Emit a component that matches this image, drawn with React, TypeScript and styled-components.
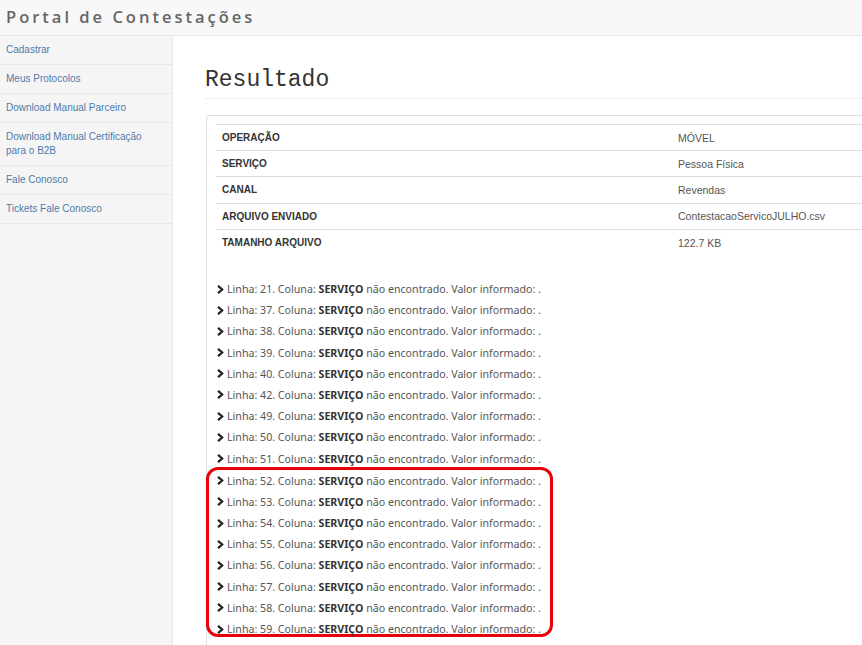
import React from "react";
import styled, { createGlobalStyle } from "styled-components";

const Global = createGlobalStyle`
  html, body { margin: 0; padding: 0; background: #fff; }
  body { font-family: "Liberation Sans", Arial, sans-serif; overflow: hidden; }
  * { box-sizing: border-box; }
`;

const Page = styled.div`
  width: 862px;
  height: 645px;
  display: flex;
  flex-direction: column;
  overflow: hidden;
`;

const Header = styled.header`
  height: 36px;
  flex: none;
  background: #f8f8f8;
  border-bottom: 1px solid #e7e7e7;
  display: flex;
  align-items: center;
  padding-left: 6px;
`;

const Brand = styled.div`
  font-family: "Open Sans", "Liberation Sans", sans-serif;
  font-size: 16.5px;
  letter-spacing: 3px;
  color: #666;
  font-weight: 600;
  margin-top: -3px;
  white-space: nowrap;
`;

const Body = styled.div`
  flex: 1;
  display: flex;
  min-height: 0;
`;

const Sidebar = styled.nav`
  width: 173px;
  flex: none;
  background: #f5f5f5;
  border-right: 1px solid #e7e7e7;
`;

const NavItem = styled.a`
  display: block;
  padding: 7px 22px 7px 6px;
  font-size: 10px;
  line-height: 14px;
  color: #4e7bab;
  text-decoration: none;
  border-bottom: 1px solid #e7e7e7;
`;

const Main = styled.main`
  flex: 1;
  padding: 31px 0 0 32px;
  min-width: 0;
`;

const Title = styled.h1`
  margin: 0;
  font-family: "Liberation Mono", "DejaVu Sans Mono", monospace;
  font-weight: 400;
  font-size: 23px;
  line-height: 26px;
  color: #333;
  padding-bottom: 5px;
  border-bottom: 1px solid #eee;
`;

const Panel = styled.section`
  margin-top: 16px;
  margin-left: 1px;
  border: 1px solid #ddd;
  border-right: none;
  border-radius: 4px 0 0 4px;
  padding: 8px 0 0 9px;
  height: 600px;
`;

const Table = styled.table`
  width: 100%;
  border-collapse: collapse;
  font-size: 10px;
  color: #333;
`;

const Cell = styled.td<{ $label?: boolean }>`
  border-top: 1px solid #ddd;
  height: 26.2px;
  padding: 0 0 0 6px;
  vertical-align: middle;
  font-weight: ${(p) => (p.$label ? 700 : 400)};
  color: ${(p) => (p.$label ? "#333" : "#555")};
  width: ${(p) => (p.$label ? "456px" : "auto")};
  font-size: ${(p) => (p.$label ? "10px" : "10.5px")};
`;

const ErrorList = styled.ul`
  list-style: none;
  margin: 23px 0 0 0;
  padding: 0;
`;

const Highlight = styled.div`
  border: 3px solid #e8000b;
  border-radius: 12px;
  width: 347px;
  margin: -2px 0 0 -10px;
  padding: 0 0 0 7px;
  height: 170px;
`;

const ErrorItem = styled.li`
  display: flex;
  align-items: center;
  height: 21.2px;
  font-family: "Noto Sans", "Open Sans", sans-serif;
  font-size: 10.65px;
  color: #555;
  white-space: nowrap;
  b { color: #333; font-weight: 700; }
`;

const Chevron = styled.svg`
  width: 8px;
  height: 9px;
  margin-right: 3px;
  flex: none;
`;

const nav = [
  "Cadastrar",
  "Meus Protocolos",
  "Download Manual Parceiro",
  "Download Manual Certificação para o B2B",
  "Fale Conosco",
  "Tickets Fale Conosco",
];

const rows: [string, string][] = [
  ["OPERAÇÃO", "MÓVEL"],
  ["SERVIÇO", "Pessoa Física"],
  ["CANAL", "Revendas"],
  ["ARQUIVO ENVIADO", "ContestacaoServicoJULHO.csv"],
  ["TAMANHO ARQUIVO", "122.7 KB"],
];

const before = [21, 37, 38, 39, 40, 42, 49, 50, 51];
const highlighted = [52, 53, 54, 55, 56, 57, 58, 59];

function Err({ n }: { n: number }) {
  return (
    <ErrorItem>
      <Chevron viewBox="0 0 8 9">
        <path d="M2 0.8 L6.2 4.5 L2 8.2" fill="none" stroke="#222" strokeWidth="2.2" />
      </Chevron>
      <span>
        Linha: {n}. Coluna: <b>SERVIÇO</b> não encontrado. Valor informado: .
      </span>
    </ErrorItem>
  );
}

export default function App() {
  return (
    <Page>
      <Global />
      <Header>
        <Brand>Portal de Contestações</Brand>
      </Header>
      <Body>
        <Sidebar>
          {nav.map((n) => (
            <NavItem key={n} href="#">
              {n}
            </NavItem>
          ))}
        </Sidebar>
        <Main>
          <Title>Resultado</Title>
          <Panel>
            <Table>
              <tbody>
                {rows.map(([k, v]) => (
                  <tr key={k}>
                    <Cell $label>{k}</Cell>
                    <Cell>{v}</Cell>
                  </tr>
                ))}
              </tbody>
            </Table>
            <ErrorList>
              {before.map((n) => (
                <Err key={n} n={n} />
              ))}
              <Highlight>
                {highlighted.map((n) => (
                  <Err key={n} n={n} />
                ))}
              </Highlight>
            </ErrorList>
          </Panel>
        </Main>
      </Body>
    </Page>
  );
}
